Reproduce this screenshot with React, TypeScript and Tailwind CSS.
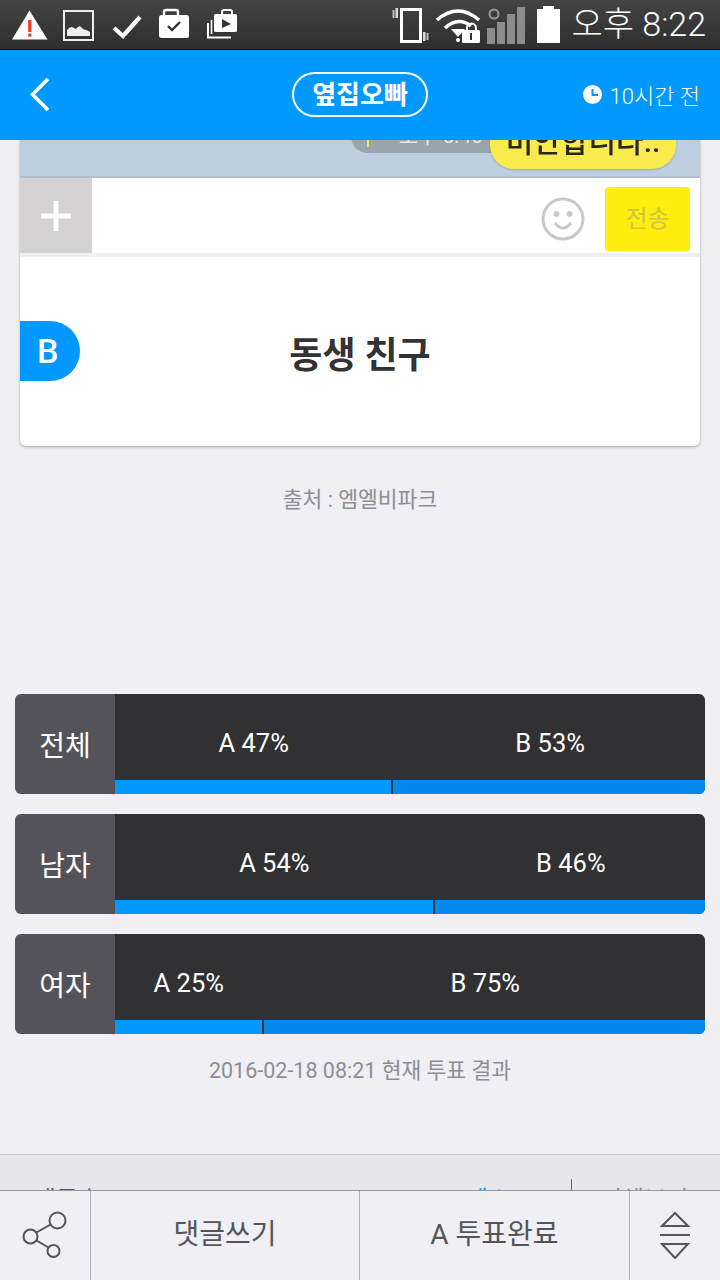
import React from "react";

const font = { fontFamily: '"Roboto","Noto Sans CJK KR",sans-serif' };

function StatusLeft() {
  return (
    <div className="flex items-center">
      <svg width="240" height="49" viewBox="0 0 240 49" fill="none">
        <path d="M29.5 10.5 L47.5 39.5 L12 39.5 Z" fill="#fff" />
        <rect x="28.2" y="20" width="3.2" height="12" fill="#f4391c" />
        <rect x="28.2" y="33.5" width="3.2" height="3.2" fill="#f4391c" />
        <rect x="64" y="11" width="29" height="29" stroke="#eeeeee" strokeWidth="2" />
        <path d="M67 36 V30 Q71 25 74 28 Q76 30 78 27 Q80 25 83 29 Q87 30 90 32 V36 Z" fill="#eeeeee" />
        <path d="M114 28 L123 36 L140 17" stroke="#fff" strokeWidth="4.2" />
        <path d="M164 15 V12 Q164 10 166 10 H176 Q178 10 178 12 V15" stroke="#fff" strokeWidth="2.4" />
        <rect x="159" y="15" width="30" height="23" rx="2.5" fill="#fff" />
        <path d="M168 26 L172 30 L180 22" stroke="#333" strokeWidth="2.4" />
        <path d="M222 15 V12 Q222 10 224 10 H230 Q232 10 232 12 V15" stroke="#fff" strokeWidth="2" />
        <rect x="214" y="14" width="23" height="18" rx="1.5" fill="#fff" />
        <path d="M222 19 L231 24 L222 28 Z" fill="#333" />
        <path d="M208 23 V37.5 H231" stroke="#fff" strokeWidth="2" />
        <path d="M211.5 20 V34 " stroke="#fff" strokeWidth="1.6" />
      </svg>
    </div>
  );
}

function StatusRight() {
  return (
    <div className="flex items-center">
      <svg width="148" height="49" viewBox="0 0 148 49" fill="none">
        <rect x="3.5" y="10" width="2" height="8" fill="#bbb" />
        <rect x="6.5" y="8" width="2.5" height="10" fill="#ddd" />
        <rect x="12.5" y="9.5" width="19" height="32" stroke="#fff" strokeWidth="3" />
        <rect x="34" y="32" width="2.5" height="9" fill="#ddd" />
        <rect x="37.5" y="33" width="2" height="7" fill="#bbb" />
        <path d="M48 20 Q69 2 90 20" stroke="#fff" strokeWidth="3.5" />
        <path d="M56 28 Q69 16 82 26" stroke="#fff" strokeWidth="3.5" />
        <path d="M62 29 H76 L69 37 Z" fill="#fff" />
        <circle cx="69" cy="40" r="2" fill="#fff" />
        <path d="M78 30 V28 a4.5 4.5 0 0 1 9 0 V30" stroke="#fff" strokeWidth="2" />
        <rect x="73" y="30" width="18" height="13" rx="1.5" fill="#fff" />
        <rect x="81" y="33" width="2" height="7" fill="#333" />
        <circle cx="105" cy="14" r="4.5" stroke="#999" strokeWidth="2" />
        <rect x="98" y="28" width="8" height="16" fill="#8c8c8c" />
        <rect x="108" y="22" width="8" height="22" fill="#8c8c8c" />
        <rect x="118" y="14" width="8" height="30" fill="#8c8c8c" />
        <rect x="128" y="7" width="8" height="37" fill="#8c8c8c" />
      </svg>
      <svg width="23" height="37" viewBox="0 0 23 37">
        <path d="M6 0 H17 V3 H23 V37 H0 V3 H6 Z" fill="#fff" />
      </svg>
      <span className="text-[34px] leading-none text-white ml-[11px] mr-[14px] -mt-[1px] font-light">오후 8:22</span>
    </div>
  );
}

function Bar({ label, a, b }: { label: string; a: number; b: number }) {
  return (
    <div className="flex h-[100px] rounded-md overflow-hidden">
      <div className="w-[100px] bg-[#545359] flex items-center justify-center text-white text-[28px] leading-none pt-[6px]">
        {label}
      </div>
      <div className="flex-1 bg-[#313133] flex flex-col">
        <div className="flex-1 flex items-center text-white text-[25.5px] leading-none pt-[14px]">
          <div className="text-center" style={{ width: `${a}%` }}>A {a}%</div>
          <div className="text-center pl-[3px]" style={{ width: `${b}%` }}>B {b}%</div>
        </div>
        <div className="h-[14px] flex">
          <div className="bg-[#0099ff]" style={{ width: `calc(${a}% - 1px)` }} />
          <div className="w-[2px] bg-[#313133]" />
          <div className="flex-1 bg-[#0288ee]" />
        </div>
      </div>
    </div>
  );
}

export default function App() {
  return (
    <div className="w-[720px] h-[1280px] bg-[#efeff4] flex flex-col overflow-hidden relative" style={font}>
      <div className="h-[50px] shrink-0 flex justify-between bg-gradient-to-b from-[#444444] to-[#2e2e2e] border-b-[1px] border-black">
        <StatusLeft />
        <StatusRight />
      </div>

      <div className="h-[90px] shrink-0 bg-[#0099ff] flex items-center justify-between relative z-10">
        <svg width="70" height="90" viewBox="0 0 70 90" fill="none">
          <path d="M48 29 L32.5 44.5 L48 60" stroke="#fff" strokeWidth="3.6" />
        </svg>
        <div className="absolute left-[292px] top-[22px] w-[136px] h-[45px] rounded-full border-[2px] border-white flex items-center justify-center text-white text-[26px] font-bold leading-none">
          옆집오빠
        </div>
        <div className="flex items-center gap-[8px] pr-[20px] text-white text-[22px] leading-none font-light">
          <svg width="19" height="19" viewBox="0 0 19 19" className="-mt-[2px]">
            <circle cx="9.5" cy="9.5" r="9.5" fill="#fff" />
            <path d="M9.5 4 V10 H15" stroke="#0099ff" strokeWidth="2" fill="none" />
          </svg>
          <span className="pt-[3px]">10시간 전</span>
        </div>
      </div>

      <div className="ml-[20px] w-[680px] h-[306px] shrink-0 bg-white rounded-b-md shadow-[0_1px_3px_rgba(0,0,0,0.3)] overflow-hidden flex flex-col">
        <div className="h-[38px] bg-[#bdcfdf] border-b-[2px] border-[#aebfcd] relative overflow-hidden">
          <div className="absolute left-[331px] -top-[20px] w-[160px] h-[33px] rounded-full bg-[#98a5ad] flex items-center justify-end pr-[28px] text-[21px] leading-none text-[#e6e8ea] blur-[0.4px]">
            <span className="absolute left-[16px] top-[20px] w-[2px] h-[7px] bg-[#f4e75a]" />
            오후 5:40
          </div>
          <div className="absolute left-[470px] -top-[40px] w-[186px] h-[69px] rounded-[24px] bg-[#f9ea4e] shadow-[0_1px_2px_rgba(0,0,0,0.2)] flex items-end justify-center pb-[12px] text-[30px] leading-none font-medium text-[#26261a] blur-[0.4px]">
            미안합니다..
          </div>
        </div>
        <div className="h-[75px] flex">
          <div className="w-[72px] bg-[#d4d2d3] flex items-center justify-center">
            <svg width="32" height="32" viewBox="0 0 32 32">
              <path d="M16 1 V31 M1 16 H31" stroke="#fff" strokeWidth="5" />
            </svg>
          </div>
          <div className="flex-1 flex items-center justify-end pt-[6px]">
            <svg width="44" height="44" viewBox="0 0 44 44" fill="none" className="mr-[20px]">
              <circle cx="22" cy="22" r="20" stroke="#c9c9c9" strokeWidth="3" />
              <circle cx="15.5" cy="17" r="3" fill="#c9c9c9" />
              <circle cx="28.5" cy="17" r="3" fill="#c9c9c9" />
              <path d="M14 26 Q22 36 30 26" stroke="#c9c9c9" strokeWidth="3" />
            </svg>
            <div className="w-[85px] h-[64px] mr-[10px] bg-[#ffee10] rounded-sm flex items-center justify-center text-[24px] leading-none text-[#d0c440] shadow-[0_1px_1px_rgba(0,0,0,0.1)]">
              전송
            </div>
          </div>
        </div>
        <div className="h-[4px] bg-[#efeff2]" />
        <div className="flex-1 relative flex items-center justify-center text-[#333333] text-[36px] font-bold leading-none pt-[8px]">
          <div className="absolute left-0 top-[64px] w-[60px] h-[60px] bg-[#0099ff] rounded-r-full flex items-center justify-start pl-[17px] text-white text-[34px] font-medium leading-none">
            B
          </div>
          동생 친구
        </div>
      </div>

      <div className="h-[248px] shrink-0 pt-[41px] text-center text-[21.5px] leading-[26px] text-[#8e8e93]">
        출처 : 엠엘비파크
      </div>

      <div className="px-[15px] flex flex-col gap-[20px] shrink-0">
        <Bar label="전체" a={47} b={53} />
        <Bar label="남자" a={54} b={46} />
        <Bar label="여자" a={25} b={75} />
      </div>

      <div className="h-[120px] shrink-0 pt-[24px] text-center text-[21.5px] leading-[26px] text-[#8e8e93]">
        2016-02-18 08:21 현재 투표 결과
      </div>

      <div className="h-[36px] shrink-0 bg-[#e6e6eb] border-t-[1px] border-[#c9c9cc] flex items-end overflow-hidden text-[24px] leading-none">
        <div className="w-[571px] h-[2px] relative">
          <span className="absolute left-[34px] top-0 text-[#555559]">댓글수</span>
          <span className="absolute left-[466px] top-0 text-[#0099ff]">베스트</span>
        </div>
        <div className="w-[1px] h-[11px] bg-[#666]" />
        <div className="flex-1 h-[2px] relative">
          <span className="absolute left-[28px] top-0 text-[#88888c]">전체보기</span>
        </div>
      </div>

      <div className="h-[90px] shrink-0 bg-[#efeff4] border-t-[1px] border-[#99999d] flex text-[#555559] text-[28px] leading-none">
        <div className="w-[91px] border-r-[1px] border-[#b0b0b6] flex items-center justify-center">
          <svg width="46" height="50" viewBox="0 0 46 50" fill="none" className="mr-[1px] mt-[1px]">
            <circle cx="35.5" cy="9.5" r="8" stroke="#555559" strokeWidth="2" />
            <circle cx="8.5" cy="25.5" r="7" stroke="#555559" strokeWidth="2" />
            <circle cx="31.5" cy="40" r="6" stroke="#555559" strokeWidth="2" />
            <path d="M14.5 21.5 L28.5 13.5 M14.5 29.5 L26.5 36.5" stroke="#555559" strokeWidth="2" />
          </svg>
        </div>
        <div className="w-[269px] border-r-[1px] border-[#b0b0b6] flex items-center justify-center pb-[2px]">댓글쓰기</div>
        <div className="w-[270px] border-r-[1px] border-[#b0b0b6] flex items-center justify-center pb-[2px]">A 투표완료</div>
        <div className="flex-1 flex items-center justify-center">
          <svg width="30" height="48" viewBox="0 0 30 48" fill="none" className="-mt-[2px]">
            <path d="M2 15 L15 2 L28 15 Z" stroke="#555559" strokeWidth="2" />
            <path d="M0 24 H30" stroke="#555559" strokeWidth="2" />
            <path d="M2 33 L15 47 L28 33 Z" stroke="#555559" strokeWidth="2" />
          </svg>
        </div>
      </div>
    </div>
  );
}
